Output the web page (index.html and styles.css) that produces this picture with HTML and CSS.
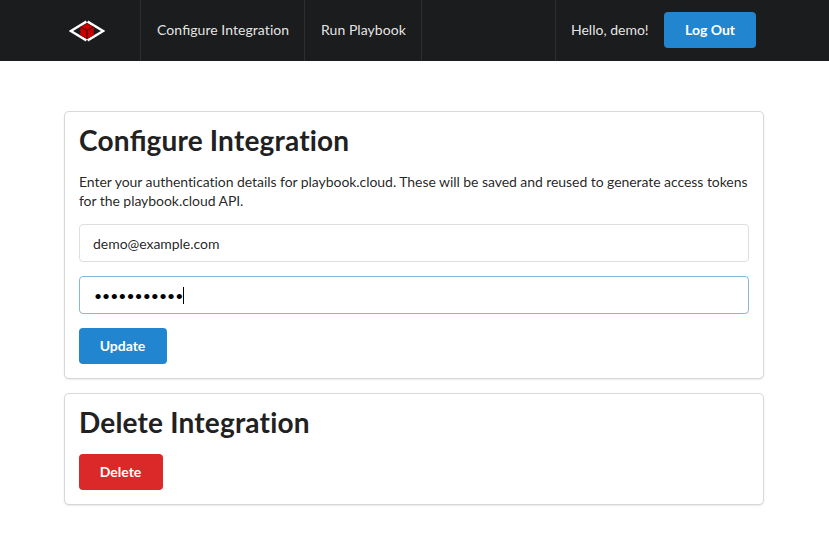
FILE: index.html
```
<!DOCTYPE html>
<html lang="en">
<head>
<meta charset="utf-8">
<title>Configure Integration</title>
<link rel="stylesheet" href="styles.css">
</head>
<body>
<nav class="menu">
  <a class="brand" aria-label="Home">
    <svg class="logo" width="36" height="24" viewBox="0 0 36 24">
      <path d="M17.4 2.6 1.8 12 17.4 21.4M18.6 2.6 34.2 12 18.6 21.4" fill="none" stroke="#fff" stroke-width="2.4"/>
      <path d="M18 4.4 24.7 8v8.2L18 19.8 11.3 16.2V8z" fill="#c80000"/>
      <path d="M11.7 8 18 11.5 24.3 8M18 11.5v8.2" fill="none" stroke="#3d0505" stroke-width=".9"/>
    </svg>
  </a>
  <a class="item configure"><span>Con<span class="lig">fi</span>gure Integration</span></a>
  <a class="item run">Run Playbook</a>
  <div class="account">
    <span class="greeting">Hello, demo!</span>
    <button class="button primary logout">Log Out</button>
  </div>
</nav>
<main class="cards">
  <section class="card">
    <h1>Con<span class="lig">fi</span>gure Integration</h1>
    <p>Enter your authentication details for playbook.cloud. These will be saved and reused to generate access tokens for the playbook.cloud API.</p>
    <div class="field"><span class="email">demo@example.com</span></div>
    <div class="field focused"><span class="dots">•••••••••••</span><span class="caret"></span></div>
    <button class="button primary update">Update</button>
  </section>
  <section class="card">
    <h1>Delete Integration</h1>
    <button class="button negative delete">Delete</button>
  </section>
</main>
</body>
</html>
```
FILE: styles.css
```
* { box-sizing: border-box; }
body {
  margin: 0;
  min-height: 533px;
  background: #fff;
  color: rgba(0, 0, 0, .87);
  font: 14px/19px Lato, "Liberation Sans", sans-serif;
  font-variant-ligatures: none;
}
.lig { font-variant-ligatures: normal; letter-spacing: 0; }
.menu {
  display: flex;
  height: 61px;
  padding-left: 64px;
  background: #1b1c1d;
  color: rgba(255, 255, 255, .9);
}
.brand, .item, .account {
  display: flex;
  align-items: center;
  padding-bottom: 1px;
  border-right: 1px solid #2d2e2f;
}
.brand { width: 77px; padding: 0 0 0 5px; }
.item {
  padding: 0 0 2px 16px;
  letter-spacing: .06px;
  white-space: nowrap;
}
.configure { width: 164px; }
.run { width: 117px; }
.account {
  margin-left: auto;
  width: 274px;
  padding-left: 15px;
  border-right: 0;
  border-left: 1px solid #2d2e2f;
}
.greeting { width: 93px; padding-bottom: 2px; white-space: nowrap; }
.button {
  height: 36px;
  padding: 0 1px 0 0;
  border: 0;
  border-radius: 4px;
  color: #fff;
  font: bold 14px/14px Lato, "Liberation Sans", sans-serif;
}
.primary { background: #2185d0; }
.negative { background: #db2828; }
.logout { width: 92px; padding: 0; }
.update { width: 88px; }
.delete { width: 84px; }
.cards {
  display: flex;
  flex-direction: column;
  gap: 16px;
  width: 698px;
  margin: 51px 0 0 65px;
}
.card {
  padding: 10px 14px 14px;
  border-radius: 4px;
  box-shadow: 0 1px 3px 0 #d4d4d5, 0 0 0 1px #dadadb;
}
.button, .logo { display: block; }
h1 {
  margin: 0 0 14px;
  color: #212121;
  font-size: 28px;
  font-weight: 700;
  line-height: 36px;
  letter-spacing: .19px;
}
p {
  margin: 0 -4px 14px 0;
  letter-spacing: -.057px;
}
.field {
  display: flex;
  align-items: center;
  height: 38px;
  margin-bottom: 14px;
  padding: 0 13px;
  border: 1px solid #dededf;
  border-radius: 4px;
}
.email { letter-spacing: -.04px; }
.focused { padding-left: 14px; border-color: #85b7d9; color: #000; }
.caret { width: 1px; height: 17px; background: #000; }
```
